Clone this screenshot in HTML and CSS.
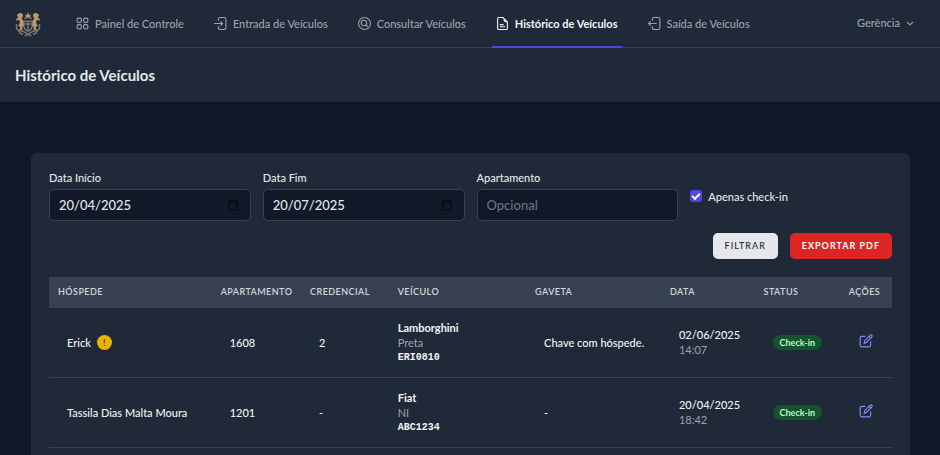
FILE: index.html
```html
<!DOCTYPE html>
<html lang="pt-BR">
<head>
<meta charset="utf-8">
<meta name="viewport" content="width=device-width, initial-scale=1">
<title>Histórico de Veículos</title>
<link rel="stylesheet" href="styles.css">
</head>
<body>
<nav class="nav">
  <a class="logo" href="#" aria-label="Início">
    <svg viewBox="0 0 48 48" width="26" height="26" aria-hidden="true">
      <g fill="none" stroke="#77736f" stroke-width="3">
        <path d="M17 14q7-4 14 0M16 19h16v9q-2 7-8 9-6-2-8-9z"/>
        <path d="M17 24h14M24 20v14M3 33q5 6 11 4l10 6 10-6q6 2 11-4M7 40l8 3M41 40l-8 3M18 46l6-3 6 3M3 24v9M45 24v9"/>
      </g>
      <g fill="#bd9a6c">
        <path d="M4 7l5-4 5 2 1 5-3 3 3 5 1 8-3 5 1 4H8l2-5-4-3 3-5-1-6-5 2-1-3 4-3-2-3z"/>
        <path d="M44 7l-5-4-5 2-1 5 3 3-3 5-1 8 3 5-1 4h6l-2-5 4-3-3-5 1-6 5 2 1-3-4-3 2-3z"/>
        <path d="M19 6l3 2 2-6 2 6 3-2-1 5h-8z"/>
      </g>
    </svg>
  </a>
  <div class="links">
    <a class="link" href="#">
      <svg class="icon" viewBox="0 0 24 24"><rect x="2" y="2" width="8" height="8" rx="3"/><rect x="14" y="2" width="8" height="8" rx="3"/><rect x="2" y="14" width="8" height="8" rx="3"/><rect x="14" y="14" width="8" height="8" rx="3"/></svg>
      Painel de Controle</a>
    <a class="link" href="#">
      <svg class="icon" viewBox="0 0 24 24"><path d="M8 7V4q0-3 3-3h8q3 0 3 3v16q0 3-3 3h-8q-3 0-3-3v-3M0 12h16m-4-4 4 4-4 4"/></svg>
      Entrada de Veículos</a>
    <a class="link" href="#">
      <svg class="icon" viewBox="0 0 24 24"><circle cx="12" cy="12" r="11"/><circle cx="11" cy="11" r="5"/><path d="m15 15 3 3"/></svg>
      Consultar Veículos</a>
    <a class="link active" href="#" aria-current="page">
      <svg class="icon" viewBox="0 0 24 24"><path d="M5 1h8l8 8v12q0 2-2 2H5q-2 0-2-2V3q0-2 2-2zM12 1q3 0 3 4v1q0 2 2 2 4 0 4 3M7 14h7M7 18h10"/></svg>
      Histórico de Veículos</a>
    <a class="link" href="#">
      <svg class="icon" viewBox="0 0 24 24"><path d="M8 7V4q0-3 3-3h8q3 0 3 3v16q0 3-3 3h-8q-3 0-3-3v-3M16 12H1m4-4-4 4 4 4"/></svg>
      Saída de Veículos</a>
  </div>
  <button class="user" type="button">Gerência
    <svg viewBox="0 0 20 20" width="12" height="12" aria-hidden="true"><path d="m5 8 5 5 5-5" fill="none" stroke="currentColor" stroke-width="2"/></svg>
  </button>
</nav>
<header class="heading"><h1>Histórico de Veículos</h1></header>
<main class="card">
  <form class="filters">
    <div class="field">
      <label for="inicio">Data Início</label>
      <div class="date">
        <input id="inicio" type="text" inputmode="numeric" value="20/04/2025">
        <svg class="calendar" viewBox="0 0 12 12" aria-hidden="true"><path d="M2 2h8v9H2zM3 0v2M9 0v2M2 3h8"/></svg>
      </div>
    </div>
    <div class="field">
      <label for="fim">Data Fim</label>
      <div class="date">
        <input id="fim" type="text" inputmode="numeric" value="20/07/2025">
        <svg class="calendar" viewBox="0 0 12 12" aria-hidden="true"><path d="M2 2h8v9H2zM3 0v2M9 0v2M2 3h8"/></svg>
      </div>
    </div>
    <div class="field">
      <label for="apto">Apartamento</label>
      <input id="apto" type="text" placeholder="Opcional">
    </div>
    <label class="check"><input type="checkbox" checked>Apenas check-in</label>
    <div class="actions">
      <button class="btn" type="button">Filtrar</button>
      <button class="btn danger" type="button">Exportar PDF</button>
    </div>
  </form>
  <table class="table">
    <colgroup><col class="c-guest"><col class="c-apt"><col class="c-cred"><col class="c-car"><col class="c-drawer"><col class="c-date"><col class="c-status"><col class="c-act"></colgroup>
    <thead>
      <tr><th>Hóspede</th><th>Apartamento</th><th>Credencial</th><th>Veículo</th><th>Gaveta</th><th>Data</th><th>Status</th><th>Ações</th></tr>
    </thead>
    <tbody>
      <tr>
        <td><div class="guest">Erick <span class="warn">!</span></div></td>
        <td>1608</td><td>2</td>
        <td class="car"><div class="strong">Lamborghini</div><div class="muted">Preta</div><div class="plate">ERI0810</div></td>
        <td>Chave com hóspede.</td>
        <td><div>02/06/2025</div><div class="muted">14:07</div></td>
        <td><span class="badge">Check-in</span></td>
        <td class="act"><a href="#" aria-label="Editar"><svg class="edit" viewBox="0 0 24 24"><path d="M11 4H5q-3 0-3 3v12q0 3 3 3h12q3 0 3-3v-6M9 16l1-5 9-9q2-1 3 0t0 3l-9 9zM17 4l3 3"/></svg></a></td>
      </tr>
      <tr>
        <td>Tassila Dias Malta Moura</td>
        <td>1201</td><td>-</td>
        <td class="car"><div class="strong">Fiat</div><div class="muted">NI</div><div class="plate">ABC1234</div></td>
        <td>-</td>
        <td><div>20/04/2025</div><div class="muted">18:42</div></td>
        <td><span class="badge">Check-in</span></td>
        <td class="act"><a href="#" aria-label="Editar"><svg class="edit" viewBox="0 0 24 24"><path d="M11 4H5q-3 0-3 3v12q0 3 3 3h12q3 0 3-3v-6M9 16l1-5 9-9q2-1 3 0t0 3l-9 9zM17 4l3 3"/></svg></a></td>
      </tr>
    </tbody>
  </table>
</main>
</body>
</html>
```
FILE: styles.css
```css
* { box-sizing: border-box; }
body {
  margin: 0;
  background: #111827;
  color: #f3f4f6;
  font: 500 11px/15px Lato, "Liberation Sans", sans-serif;
}
a { color: inherit; text-decoration: none; }
button, input { font: inherit; }
.nav {
  display: flex;
  height: 48px;
  padding: 0 24px 0 15px;
  background: #1f2937;
  border-bottom: 1px solid #374151;
}
.logo { display: flex; align-items: center; margin-right: 31px; }
.links { display: flex; gap: 22px; margin-bottom: -1px; }
.link {
  display: flex;
  align-items: center;
  gap: 6px;
  padding: 0 4px;
  border-bottom: 2px solid transparent;
  color: #9ca3af;
  white-space: nowrap;
}
.active { color: #f3f4f6; border-color: #4f46e5; font-weight: 700; }
.icon { width: 13px; height: 13px; fill: none; stroke: currentColor; stroke-width: 2; }
.user {
  display: flex;
  align-items: center;
  gap: 4px;
  margin-left: auto;
  padding: 0 0 2px;
  border: 0;
  background: none;
  color: #9ca3af;
}
.heading {
  padding: 18px 15px;
  background: #1f2937;
  box-shadow: 0 1px 2px rgba(0, 0, 0, .3);
}
h1 { margin: 0; font-size: 15px; line-height: 18px; font-weight: 700; color: #e5e7eb; }
.card {
  margin: 51px 30px 0 31px;
  padding: 18px;
  background: #1f2937;
  border-radius: 6px;
}
.filters { display: grid; grid-template-columns: repeat(4, 1fr); gap: 12px; }
.field label { display: block; margin-bottom: 4px; line-height: 14px; color: #e5e7eb; }
.field input {
  display: block;
  width: 100%;
  height: 32px;
  padding: 0 9px;
  border: 1px solid #374151;
  border-radius: 5px;
  background: #111827;
  color: #e5e7eb;
  font-size: 13px;
}
.field input::placeholder { color: #6b7280; opacity: 1; }
.date { position: relative; }
.calendar {
  position: absolute;
  top: 10px;
  right: 12px;
  width: 12px;
  height: 12px;
  fill: none;
  stroke: #05080d;
  stroke-width: 1;
}
.check { display: flex; align-items: center; align-self: center; gap: 6px; color: #e5e7eb; }
.check input {
  appearance: none;
  width: 12px;
  height: 12px;
  margin: 0;
  border-radius: 3px;
  background: #4f46e5;
  display: grid;
  place-items: center;
}
.check input::before {
  content: "";
  width: 6px;
  height: 3px;
  border: solid #fff;
  border-width: 0 0 2px 2px;
  transform: translateY(-1px) rotate(-45deg);
}
.actions { grid-column: 1 / -1; display: flex; justify-content: flex-end; gap: 12px; }
.btn {
  height: 26px;
  padding: 0 12px 1px;
  border: 0;
  border-radius: 5px;
  background: #e5e7eb;
  color: #1f2937;
  font-size: 9px;
  font-weight: 500;
  letter-spacing: 1px;
  text-transform: uppercase;
}
.danger { background: #dc2626; color: #fff; font-weight: 700; }
.table { width: 100%; margin-top: 18px; border-collapse: separate; border-spacing: 0; table-layout: fixed; }
.c-guest { width: 19.3%; }
.c-apt { width: 10.6%; }
.c-cred { width: 10.4%; }
.c-car { width: 16.3%; }
.c-drawer { width: 16%; }
.c-date { width: 11.1%; }
.c-status { width: 10.1%; }
.c-act { width: 6.2%; }
th {
  height: 31px;
  padding: 0 9px 2px;
  background: #374151;
  color: #d1d5db;
  font-size: 9px;
  font-weight: 600;
  letter-spacing: 0.05em;
  text-align: left;
  text-transform: uppercase;
  white-space: nowrap;
}
td { height: 70px; padding: 0 18px 1px; border-bottom: 1px solid #374151; white-space: nowrap; }
.car { padding: 0 9px 1px; }
.guest { display: flex; align-items: center; gap: 6px; }
.warn {
  width: 15px;
  height: 15px;
  border-radius: 50%;
  background: #eab308;
  color: #422006;
  font-size: 9px;
  text-align: center;
}
.strong { font-weight: 700; }
.muted { color: #9ca3af; font-weight: 400; }
.plate { font-family: "Liberation Mono", monospace; font-size: 10px; font-weight: 700; }
.badge {
  display: inline-block;
  padding: 0 7px;
  border-radius: 8px;
  background: #14532d;
  color: #bbf7d0;
  font-size: 9px;
  font-weight: 700;
}
.act { padding: 0 0 1px; text-align: center; }
.edit { width: 14px; height: 14px; fill: none; stroke: #818cf8; stroke-width: 2; }
```
